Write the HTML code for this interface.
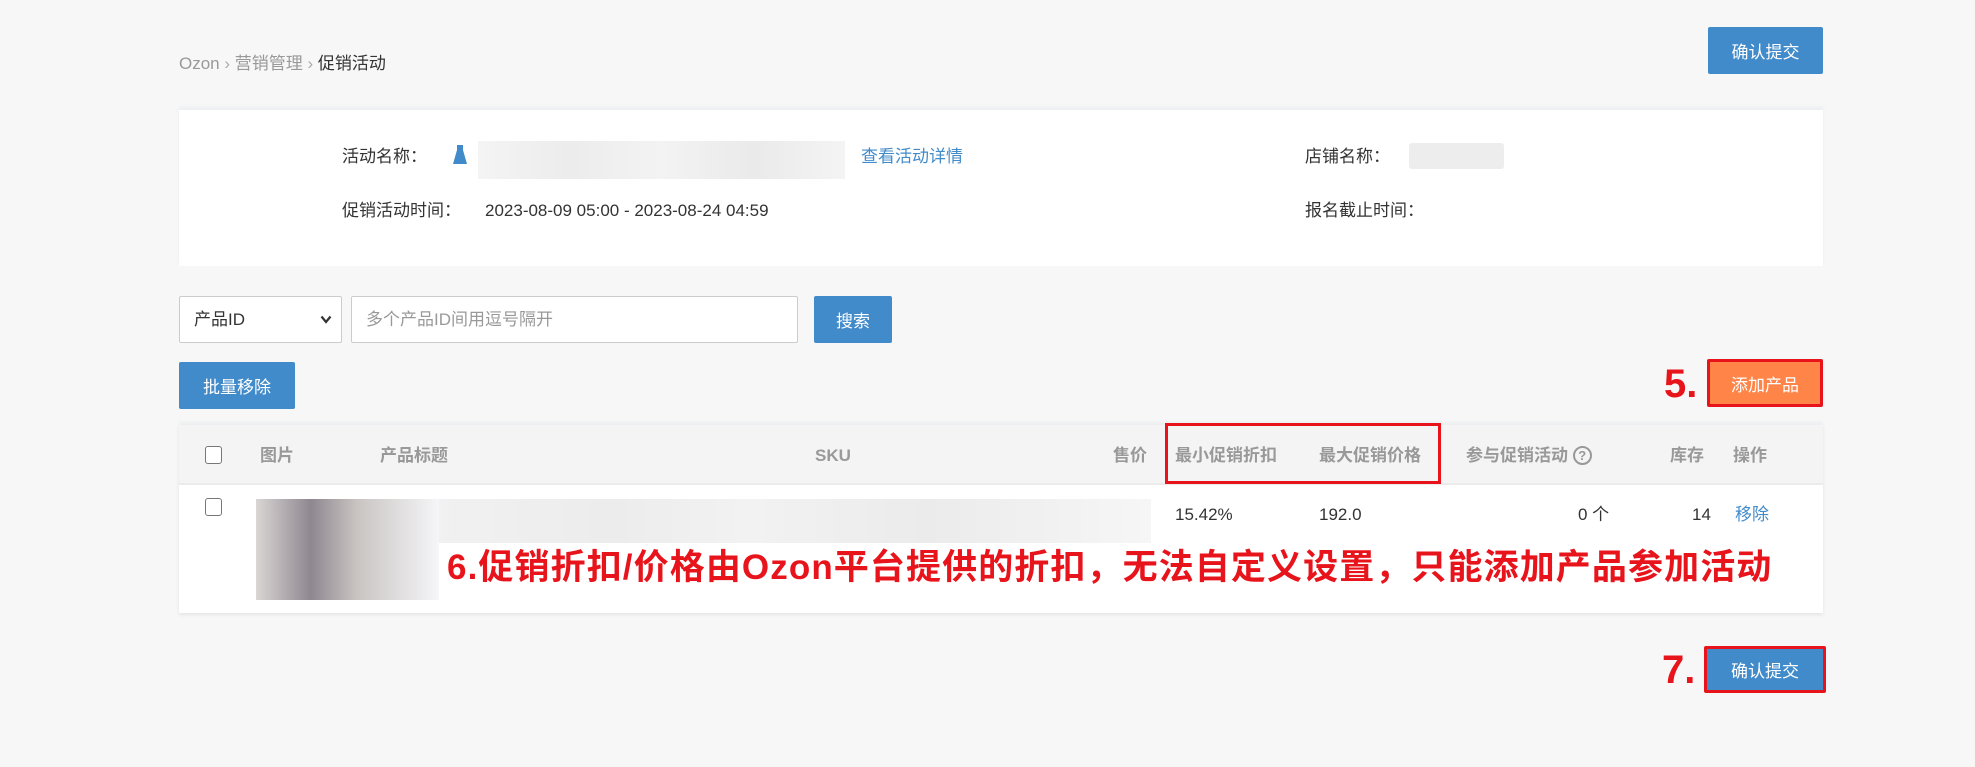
<!DOCTYPE html>
<html><head><meta charset="utf-8"><style>
*{margin:0;padding:0;box-sizing:border-box}
body{width:1975px;height:767px;background:#f7f7f7;font-family:"Liberation Sans","Noto Sans CJK SC",sans-serif;position:relative;overflow:hidden;color:#333;font-size:17px}
.a{position:absolute;white-space:nowrap;line-height:25px}
.btn{position:absolute;background:#428bca;color:#fff;font-size:17px;display:flex;align-items:center;justify-content:center;border-radius:2px}
.card{position:absolute;background:#fff;box-shadow:0 -3px 3px #eceef1}
.hd{color:#999;font-weight:bold;font-size:17px}
.cb{position:absolute;width:17px;height:18px;border:1.5px solid #777;border-radius:3px;background:#fff}
.red{color:#e8141c;font-weight:bold}
</style></head><body>
<div class="a" style="left:179px;top:51px;color:#999">Ozon <span style="color:#aaa">›</span> 营销管理 <span style="color:#aaa">›</span> <span style="color:#333">促销活动</span></div>
<div class="btn" style="left:1708px;top:27px;width:115px;height:47px">确认提交</div>

<div class="card" style="left:179px;top:110px;width:1644px;height:156px"></div>
<div class="a" style="left:342px;top:144px">活动名称：</div>
<svg class="a" style="left:452px;top:144px" width="16" height="22" viewBox="0 0 16 22"><path d="M5 1h6v5l4 14H1L5 6z" fill="#428bca"/></svg>
<div class="a" style="left:478px;top:141px;width:367px;height:38px;background:linear-gradient(90deg,#f4f4f4,#ececec,#f3f3f3,#eaeaea,#f4f4f4)"></div>
<div class="a" style="left:861px;top:144px;color:#428bca">查看活动详情</div>
<div class="a" style="left:1305px;top:144px">店铺名称：</div>
<div class="a" style="left:1409px;top:143px;width:95px;height:26px;background:#ededed;border-radius:3px"></div>
<div class="a" style="left:342px;top:198px">促销活动时间：</div>
<div class="a" style="left:485px;top:198px">2023-08-09 05:00 - 2023-08-24 04:59</div>
<div class="a" style="left:1305px;top:198px">报名截止时间：</div>

<div class="a" style="left:179px;top:296px;width:163px;height:47px;background:#fff;border:1px solid #ccc;border-radius:2px;padding:10px 14px">产品ID<svg style="position:absolute;right:9px;top:18px" width="12" height="9" viewBox="0 0 12 9"><path d="M1.5 1.5L6 7l4.5-5.5" stroke="#333" stroke-width="2.2" fill="none"/></svg></div>
<div class="a" style="left:351px;top:296px;width:447px;height:47px;background:#fff;border:1px solid #ccc;border-radius:2px;padding:10px 14px;color:#999">多个产品ID间用逗号隔开</div>
<div class="btn" style="left:814px;top:296px;width:78px;height:47px">搜索</div>
<div class="btn" style="left:179px;top:362px;width:116px;height:47px">批量移除</div>
<div class="a red" style="left:1664px;top:362px;font-size:40px;line-height:44px">5.</div>
<div class="btn" style="left:1707px;top:359px;width:116px;height:48px;background:#ff8448;border:3px solid #e8141c">添加产品</div>

<div class="card" style="left:179px;top:425px;width:1644px;height:188px;box-shadow:0 -3px 3px #eceef1,0 2px 3px #e5e5e5"></div>
<div class="a" style="left:179px;top:425px;width:1644px;height:60px;background:#f4f4f4;border-bottom:2px solid #ebebeb"></div>
<div class="cb" style="left:205px;top:446px"></div>
<div class="a hd" style="left:260px;top:443px">图片</div>
<div class="a hd" style="left:380px;top:443px">产品标题</div>
<div class="a hd" style="left:815px;top:443px">SKU</div>
<div class="a hd" style="left:1113px;top:443px">售价</div>
<div class="a hd" style="left:1175px;top:443px">最小促销折扣</div>
<div class="a hd" style="left:1319px;top:443px">最大促销价格</div>
<div class="a hd" style="left:1466px;top:443px">参与促销活动 <span style="display:inline-block;width:19px;height:19px;border:2px solid #999;border-radius:50%;font-size:13px;text-align:center;line-height:15px;vertical-align:1px">?</span></div>
<div class="a hd" style="left:1670px;top:443px">库存</div>
<div class="a hd" style="left:1733px;top:443px">操作</div>
<div class="a" style="left:1165px;top:423px;width:276px;height:61px;border:3px solid #e8141c"></div>

<div class="cb" style="left:205px;top:498px"></div>
<div class="a" style="left:256px;top:499px;width:895px;height:44px;background:linear-gradient(90deg,#f6f6f6,#ececec 40%,#f2f2f2 55%,#ebebeb 75%,#f6f6f6)"></div>
<div class="a" style="left:256px;top:499px;width:183px;height:101px;background:linear-gradient(90deg,#d9d6d4 0%,#8f8790 30%,#c9c4c2 55%,#f5f6f8 100%)"></div>
<div class="a" style="left:1175px;top:502px">15.42%</div>
<div class="a" style="left:1319px;top:502px">192.0</div>
<div class="a" style="left:1578px;top:502px">0 个</div>
<div class="a" style="left:1692px;top:502px">14</div>
<div class="a" style="left:1735px;top:502px;color:#428bca">移除</div>
<div class="a red" style="left:445px;top:546px;font-size:35px;line-height:44px;background:#fff;padding-left:2px;letter-spacing:1.1px">6.促销折扣/价格由Ozon平台提供的折扣，无法自定义设置，只能添加产品参加活动</div>

<div class="a red" style="left:1662px;top:648px;font-size:40px;line-height:44px">7.</div>
<div class="btn" style="left:1704px;top:646px;width:122px;height:47px;border:3px solid #e8141c">确认提交</div>
</body></html>
